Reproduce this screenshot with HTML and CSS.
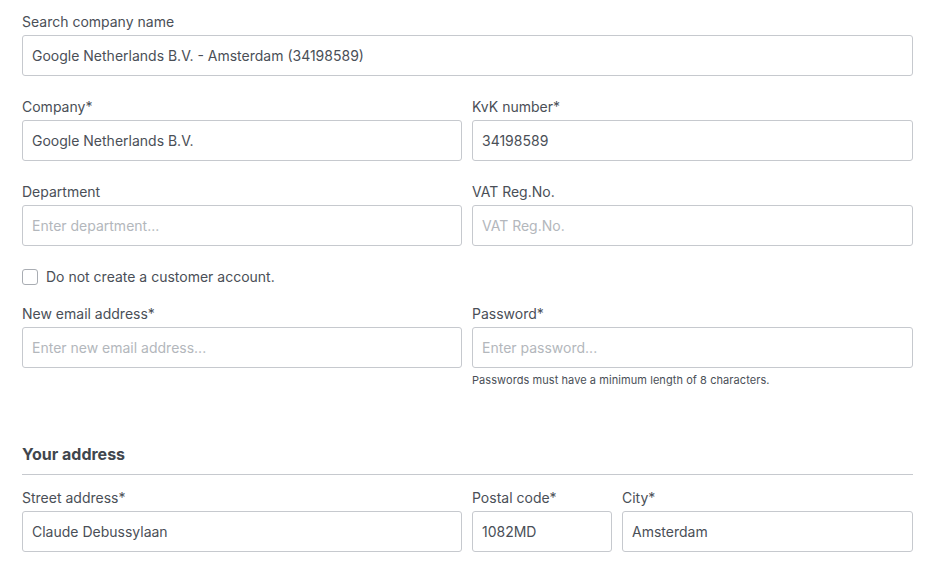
FILE: index.html
```html
<!DOCTYPE html>
<html>
<head>
<meta charset="utf-8">
<link rel="stylesheet" href="styles.css">
</head>
<body>
<form class="form">
  <div class="field">
    <label class="label">Search company name</label>
    <input class="input" type="text" value="Google Netherlands B.V. - Amsterdam (34198589)">
  </div>
  <div class="row">
    <div class="field">
      <label class="label">Company*</label>
      <input class="input" type="text" value="Google Netherlands B.V.">
    </div>
    <div class="field">
      <label class="label">KvK number*</label>
      <input class="input" type="text" value="34198589">
    </div>
  </div>
  <div class="row">
    <div class="field">
      <label class="label">Department</label>
      <input class="input" type="text" placeholder="Enter department...">
    </div>
    <div class="field">
      <label class="label">VAT Reg.No.</label>
      <input class="input" type="text" placeholder="VAT Reg.No.">
    </div>
  </div>
  <label class="check">
    <span class="box"></span>
    <span>Do not create a customer account.</span>
  </label>
  <div class="row">
    <div class="field field-tight">
      <label class="label">New email address*</label>
      <input class="input" type="text" placeholder="Enter new email address...">
    </div>
    <div class="field field-tight">
      <label class="label">Password*</label>
      <input class="input" type="password" placeholder="Enter password...">
      <div class="help">Passwords must have a minimum length of 8 characters.</div>
    </div>
  </div>
  <h3 class="heading">Your address</h3>
  <div class="row">
    <div class="field">
      <label class="label">Street address*</label>
      <input class="input" type="text" value="Claude Debussylaan">
    </div>
    <div class="subrow">
      <div class="field">
        <label class="label">Postal code*</label>
        <input class="input" type="text" value="1082MD">
      </div>
      <div class="field">
        <label class="label">City*</label>
        <input class="input" type="text" value="Amsterdam">
      </div>
    </div>
  </div>
</form>
</body>
</html>
```

FILE: styles.css
```css
* { box-sizing: border-box; }
body {
  margin: 0;
  background: #fff;
  font-family: Inter, "Noto Sans", sans-serif;
  color: #4a4f57;
}
.form {
  width: 891px;
  margin: 12px 0 0 22px;
}
.row {
  display: grid;
  grid-template-columns: 440px 441px;
  column-gap: 10px;
}
.subrow {
  display: grid;
  grid-template-columns: 140px 291px;
  column-gap: 10px;
}
.field {
  display: flex;
  flex-direction: column;
  margin-bottom: 21px;
}
.field-tight { margin-bottom: 0; }
.label {
  font-size: 14px;
  line-height: 20px;
  margin-bottom: 3px;
  color: #4a4f57;
}
.input {
  height: 41px;
  width: 100%;
  border: 1px solid #c6c9ce;
  border-radius: 3px;
  padding: 0 9px;
  font-family: Inter, "Noto Sans", sans-serif;
  font-size: 14px;
  color: #4a4f57;
  background: #fff;
  outline: none;
}
.input::placeholder { color: #b3b7bc; }
.check {
  display: flex;
  align-items: center;
  gap: 8px;
  font-size: 14px;
  line-height: 20px;
  margin-top: 0;
  margin-bottom: 17px;
}
.box {
  width: 16px;
  height: 16px;
  border: 1px solid #a9adb3;
  border-radius: 3px;
  background: #fff;
}
.help {
  font-size: 11px;
  line-height: 15px;
  letter-spacing: 0.07px;
  margin-top: 5px;
  color: #4a4f57;
}
.heading {
  margin: 54px 0 13px;
  padding-bottom: 8px;
  border-bottom: 1px solid #c6c9ce;
  font-size: 16px;
  line-height: 24px;
  font-weight: 700;
  color: #41464d;
}
```
